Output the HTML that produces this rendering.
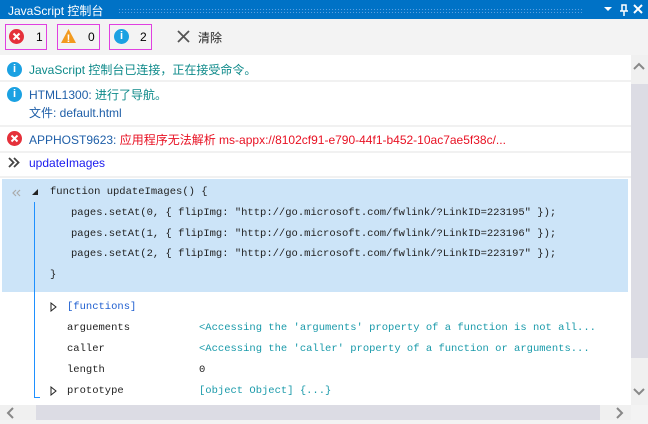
<!DOCTYPE html>
<html><head><meta charset="utf-8"><style>
*{margin:0;padding:0;box-sizing:border-box}
body{width:648px;height:424px;overflow:hidden;background:#f3f3f3;font-family:"Liberation Sans","Noto Sans CJK SC",sans-serif;font-size:12px;position:relative}
.a{position:absolute;white-space:nowrap}
.m{font-family:"Liberation Mono",monospace;font-size:10.5px}
.ic{position:absolute;width:15px;height:15px;border-radius:50%;color:#fff;font-weight:bold;font-size:11px;text-align:center;line-height:15px}
.sep{position:absolute;left:0;width:631px;height:2px;background:#f1f1f1}
</style></head><body>
<div class="a" style="left:0;top:0;width:648px;height:19px;background:#0072c6"></div>
<div class="a" style="left:8px;top:2px;color:#fff;font-size:12px">JavaScript 控制台</div>
<div class="a" style="left:118px;top:8px;width:465px;height:5px;background-image:radial-gradient(#5aa0e0 0.6px,transparent 0.8px);background-size:3px 3px"></div>
<div class="a" style="left:604px;top:7px;width:0;height:0;border-left:4px solid transparent;border-right:4px solid transparent;border-top:4px solid #fff"></div>
<svg class="a" style="left:619px;top:4px" width="10" height="12"><path d="M3 1h4v6H3zM1 7h8M5 7v5" stroke="#fff" stroke-width="1.5" fill="none"/></svg>
<svg class="a" style="left:633px;top:4px" width="10" height="10"><path d="M1 1l8 8M9 1l-8 8" stroke="#fff" stroke-width="2"/></svg>

<div class="a" style="left:5px;top:24px;width:42px;height:26px;border:1px solid #e040e0"></div>
<svg class="a" style="left:9px;top:29px" width="15" height="15"><circle cx="7.5" cy="7.5" r="7.5" fill="#e5303a"/><path d="M4.5 4.5l6 6M10.5 4.5l-6 6" stroke="#fff" stroke-width="2"/></svg>
<div class="a" style="left:36px;top:30px">1</div>
<div class="a" style="left:57px;top:24px;width:43px;height:26px;border:1px solid #e040e0"></div>
<svg class="a" style="left:60px;top:28px" width="17" height="16"><path d="M8.5 1L16 15H1z" fill="#f29a1f"/><text x="8.5" y="14" fill="#fff" font-size="11" font-weight="bold" text-anchor="middle" font-family="Liberation Sans">!</text></svg>
<div class="a" style="left:88px;top:30px">0</div>
<div class="a" style="left:109px;top:24px;width:43px;height:26px;border:1px solid #e040e0"></div>
<div class="ic" style="left:114px;top:29px;background:#1ba1e2">i</div>
<div class="a" style="left:140px;top:30px">2</div>
<svg class="a" style="left:177px;top:30px" width="13" height="13"><path d="M1 1l11 11M12 1l-11 11" stroke="#555" stroke-width="1.8"/></svg>
<div class="a" style="left:198px;top:29px;color:#222">清除</div>

<div class="a" style="left:0;top:55px;width:631px;height:350px;background:#fff"></div>
<div class="sep" style="top:80px"></div><div class="sep" style="top:125px"></div><div class="sep" style="top:151px"></div><div class="sep" style="top:176px"></div>
<div class="ic" style="left:7px;top:62px;background:#1ba1e2">i</div>
<div class="a" style="left:29px;top:61px;color:#0e8a8a">JavaScript 控制台已连接，正在接受命令。</div>
<div class="ic" style="left:7px;top:87px;background:#1ba1e2">i</div>
<div class="a" style="left:29px;top:86px;color:#1f5fa8">HTML1300: <span style="color:#0e8a8a">进行了导航。</span></div>
<div class="a" style="left:29px;top:104px;color:#1f5fa8">文件: default.html</div>
<svg class="a" style="left:7px;top:131px" width="15" height="15"><circle cx="7.5" cy="7.5" r="7.5" fill="#e5303a"/><path d="M4.5 4.5l6 6M10.5 4.5l-6 6" stroke="#fff" stroke-width="2"/></svg>
<div class="a" style="left:29px;top:131px;color:#1f5fa8">APPHOST9623: <span style="color:#e81123">应用程序无法解析 ms-appx://8102cf91-e790-44f1-b452-10ac7ae5f38c/...</span></div>
<svg class="a" style="left:8px;top:157px" width="12" height="11"><path d="M1 1l4.5 4.5L1 10M6 1l4.5 4.5L6 10" stroke="#444" stroke-width="1.8" fill="none"/></svg>
<div class="a" style="left:29px;top:156px;color:#1a1aee">updateImages</div>

<div class="a" style="left:2px;top:179px;width:626px;height:113px;background:#cce4f8"></div>
<svg class="a" style="left:11px;top:189px" width="10" height="8"><path d="M5 1L2 4l3 3M9 1L6 4l3 3" stroke="#aaa" stroke-width="1.2" fill="none"/></svg>
<div class="a" style="left:32px;top:189px;width:0;height:0;border-left:6px solid transparent;border-bottom:6px solid #222"></div>
<div class="a" style="left:34px;top:202px;width:1px;height:196px;background:#1e90ff"></div>
<div class="a" style="left:34px;top:397px;width:6px;height:1px;background:#1e90ff"></div>
<div class="a m" style="left:50px;top:186px;color:#222">function updateImages() {</div>
<div class="a m" style="left:71px;top:207px;color:#222">pages.setAt(0, { flipImg: "http://go.microsoft.com/fwlink/?LinkID=223195" });</div>
<div class="a m" style="left:71px;top:228px;color:#222">pages.setAt(1, { flipImg: "http://go.microsoft.com/fwlink/?LinkID=223196" });</div>
<div class="a m" style="left:71px;top:248px;color:#222">pages.setAt(2, { flipImg: "http://go.microsoft.com/fwlink/?LinkID=223197" });</div>
<div class="a m" style="left:50px;top:269px;color:#222">}</div>

<svg class="a" style="left:50px;top:302px" width="7" height="10"><path d="M1 1l5 4-5 4z" fill="none" stroke="#222"/></svg>
<div class="a m" style="left:67px;top:301px;color:#1f5fd0">[functions]</div>
<div class="a m" style="left:67px;top:322px;color:#222">arguements</div>
<div class="a m" style="left:199px;top:322px;color:#1a9aaa">&lt;Accessing the 'arguments' property of a function is not all...</div>
<div class="a m" style="left:67px;top:343px;color:#222">caller</div>
<div class="a m" style="left:199px;top:343px;color:#1a9aaa">&lt;Accessing the 'caller' property of a function or arguments...</div>
<div class="a m" style="left:67px;top:364px;color:#222">length</div>
<div class="a m" style="left:199px;top:364px;color:#222">0</div>
<svg class="a" style="left:50px;top:386px" width="7" height="10"><path d="M1 1l5 4-5 4z" fill="none" stroke="#222"/></svg>
<div class="a m" style="left:67px;top:385px;color:#222">prototype</div>
<div class="a m" style="left:199px;top:385px;color:#1a9aaa">[object Object] {...}</div>

<div class="a" style="left:631px;top:55px;width:17px;height:350px;background:#f0f0f0"></div>
<div class="a" style="left:631px;top:84px;width:17px;height:274px;background:#dcdce4"></div>
<svg class="a" style="left:633px;top:62px" width="12" height="8"><path d="M1 7l5-5 5 5" stroke="#888" stroke-width="2" fill="none"/></svg>
<svg class="a" style="left:633px;top:388px" width="12" height="8"><path d="M1 1l5 5 5-5" stroke="#888" stroke-width="2" fill="none"/></svg>
<div class="a" style="left:0;top:405px;width:631px;height:15px;background:#f0f0f0"></div>
<div class="a" style="left:36px;top:405px;width:564px;height:15px;background:#dcdce4"></div>
<svg class="a" style="left:6px;top:407px" width="8" height="12"><path d="M7 1L2 6l5 5" stroke="#888" stroke-width="2" fill="none"/></svg>
<svg class="a" style="left:616px;top:407px" width="8" height="12"><path d="M1 1l5 5-5 5" stroke="#888" stroke-width="2" fill="none"/></svg>
</body></html>
